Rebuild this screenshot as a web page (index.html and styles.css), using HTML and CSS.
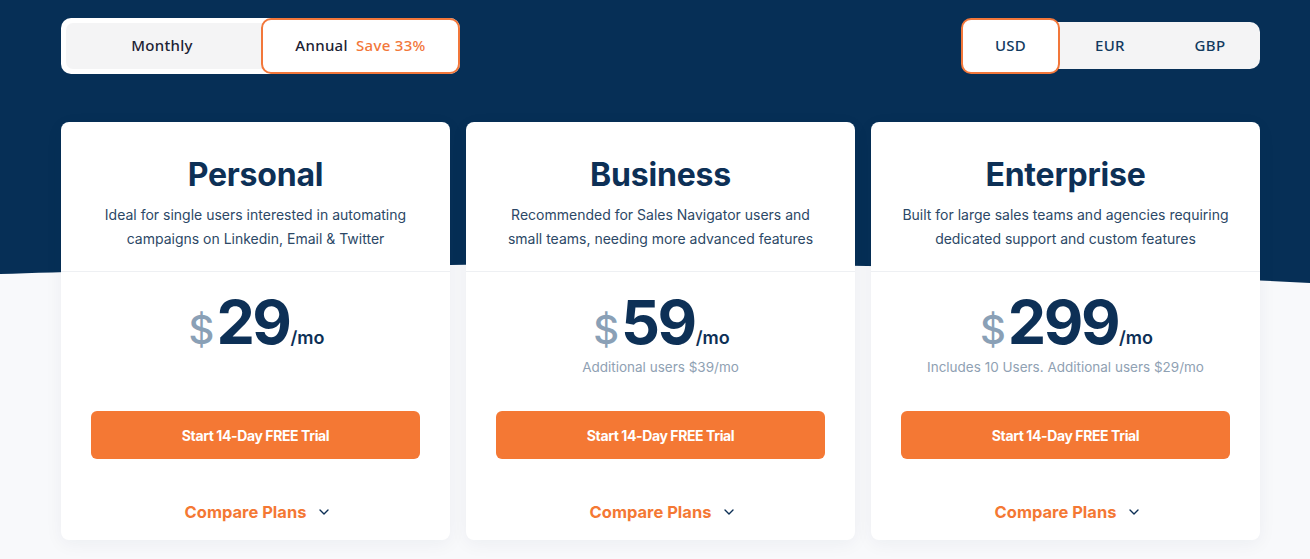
FILE: index.html
```html
<!DOCTYPE html>
<html lang="en">
<head>
<meta charset="utf-8">
<title>Pricing</title>
<link rel="stylesheet" href="styles.css">
</head>
<body>
<div class="page">
  <svg class="bg-wave" width="1310" height="290" viewBox="0 0 1310 290" preserveAspectRatio="none" aria-hidden="true">
    <path d="M0 0 H1310 V283 C900 262 700 262 450 265 C250 267 100 271 0 274 Z" fill="#062f56"/>
  </svg>
  <div class="wrap">
    <div class="toolbar">
      <div class="seg seg-period">
        <button class="seg-btn">Monthly</button>
        <button class="seg-btn active">Annual <span class="save">Save 33%</span></button>
      </div>
      <div class="seg seg-cur">
        <button class="seg-btn active">USD</button>
        <button class="seg-btn">EUR</button>
        <button class="seg-btn">GBP</button>
      </div>
    </div>

    <div class="cards">
      <div class="card">
        <div class="card-head">
          <h2>Personal</h2>
          <p>Ideal for single users interested in automating<br>campaigns on Linkedin, Email &amp; Twitter</p>
        </div>
        <div class="card-body">
          <div class="price"><span class="cur">$</span><span class="amt">29</span><span class="per">/mo</span></div>
          <div class="note"></div>
          <button class="cta">Start 14-Day FREE Trial</button>
          <a class="compare">Compare Plans <svg width="12" height="8" viewBox="0 0 12 8"><path d="M2 2 L6 6 L10 2" fill="none" stroke="#0d3056" stroke-width="1.4" stroke-linecap="round" stroke-linejoin="round"/></svg></a>
        </div>
      </div>
      <div class="card">
        <div class="card-head">
          <h2>Business</h2>
          <p>Recommended for Sales Navigator users and<br>small teams, needing more advanced features</p>
        </div>
        <div class="card-body">
          <div class="price"><span class="cur">$</span><span class="amt">59</span><span class="per">/mo</span></div>
          <div class="note">Additional users $39/mo</div>
          <button class="cta">Start 14-Day FREE Trial</button>
          <a class="compare">Compare Plans <svg width="12" height="8" viewBox="0 0 12 8"><path d="M2 2 L6 6 L10 2" fill="none" stroke="#0d3056" stroke-width="1.4" stroke-linecap="round" stroke-linejoin="round"/></svg></a>
        </div>
      </div>
      <div class="card">
        <div class="card-head">
          <h2>Enterprise</h2>
          <p>Built for large sales teams and agencies requiring<br>dedicated support and custom features</p>
        </div>
        <div class="card-body">
          <div class="price"><span class="cur">$</span><span class="amt">299</span><span class="per">/mo</span></div>
          <div class="note">Includes 10 Users. Additional users $29/mo</div>
          <button class="cta">Start 14-Day FREE Trial</button>
          <a class="compare">Compare Plans <svg width="12" height="8" viewBox="0 0 12 8"><path d="M2 2 L6 6 L10 2" fill="none" stroke="#0d3056" stroke-width="1.4" stroke-linecap="round" stroke-linejoin="round"/></svg></a>
        </div>
      </div>
    </div>
  </div>
</div>
</body>
</html>
```

FILE: styles.css
```css
* { box-sizing: border-box; }
html, body { margin: 0; padding: 0; }
body {
  background: #f8f9fb;
  font-family: "Noto Sans", "Open Sans", sans-serif;
  color: #0d3056;
}
.page {
  position: relative;
  width: 1310px;
  height: 559px;
  overflow: hidden;
}
.bg-wave {
  position: absolute;
  left: 0;
  top: 0;
  z-index: 0;
}
.wrap {
  position: relative;
  z-index: 1;
  width: 1199px;
  margin-left: 61px;
  padding-top: 18px;
}
.toolbar {
  display: flex;
  justify-content: space-between;
  align-items: flex-start;
  height: 56px;
}
.seg {
  display: flex;
  align-items: stretch;
}
.seg-btn {
  font-family: "Noto Sans", sans-serif;
  font-size: 15px;
  font-weight: 500;
  letter-spacing: 0.3px;
  border: 0;
  background: transparent;
  color: #1c2233;
  cursor: pointer;
  padding: 0 0 2px;
}
.seg-btn.active {
  background: #fff;
  border: 2px solid #f2773a;
  border-radius: 10px;
}
.seg-period {
  width: 399px;
  height: 56px;
  background: #fff;
  border-radius: 10px;
  padding: 0;
}
.seg-period .seg-btn:first-child {
  width: 200px;
  margin: 5px 0 5px 5px;
  padding-right: 8px;
  background: #f4f4f5;
  border-radius: 7px 0 0 7px;
}
.seg-period .seg-btn.active {
  width: 199px;
  margin-left: -5px;
  position: relative;
}
.save {
  color: #f2773a;
  margin-left: 4px;
}
.seg-cur {
  width: 299px;
  height: 56px;
}
.seg-cur .seg-btn {
  width: 100px;
  color: #123a60;
  background: #f4f4f5;
  margin: 4px 0 5px;
}
.seg-cur .seg-btn:last-child {
  border-radius: 0 10px 10px 0;
  width: 100px;
}
.seg-cur .seg-btn.active {
  width: 99px;
  margin: 0;
  background: #fff;
  border-radius: 10px;
  position: relative;
  z-index: 2;
}
.seg-cur .seg-btn:nth-child(2) {
  margin-left: -4px;
  padding-left: 4px;
  width: 104px;
}

.cards {
  display: grid;
  grid-template-columns: 389px 389px 389px;
  gap: 16px;
  margin-top: 48px;
}
.card {
  background: #fff;
  border-radius: 8px;
  height: 418px;
  box-shadow: 0 4px 18px rgba(20, 40, 80, 0.05);
  text-align: center;
  display: flex;
  flex-direction: column;
}
.card-head {
  padding: 33px 20px 0;
  height: 150px;
  border-bottom: 1px solid #eef0f3;
}
.card-head h2 {
  margin: 0;
  font-family: "Inter", "Noto Sans", sans-serif;
  font-weight: 700;
  font-size: 32px;
  line-height: 40px;
  letter-spacing: -0.2px;
  color: #0d3056;
}
.card-head p {
  margin: 8px 0 0;
  font-family: "Inter", "Noto Sans", sans-serif;
  font-size: 14px;
  line-height: 24px;
  color: #2c4866;
}
.card-body {
  padding: 0 30px;
  display: flex;
  flex-direction: column;
  align-items: center;
}
.price {
  margin-top: 18px;
  height: 64px;
  display: flex;
  align-items: baseline;
  justify-content: center;
  font-family: "Inter", "Noto Sans", sans-serif;
  line-height: 64px;
}
.cur {
  font-size: 40px;
  font-weight: 500;
  color: #8aa0b6;
  margin-right: 4px;
  position: relative;
  left: 2px;
}
.amt {
  font-size: 61px;
  font-weight: 700;
  color: #0d3056;
  letter-spacing: -2.5px;
}
.per {
  font-size: 18px;
  font-weight: 600;
  color: #0d3056;
  margin-left: 1px;
}
.note {
  margin-top: 3px;
  height: 20px;
  font-family: "Inter", "Noto Sans", sans-serif;
  font-size: 13.5px;
  line-height: 20px;
  color: #8fa1b3;
}
.cta {
  margin-top: 34px;
  width: 329px;
  height: 48px;
  border: 0;
  border-radius: 6px;
  background: #f47834;
  color: #fff;
  font-family: "Inter", "Noto Sans", sans-serif;
  font-weight: 700;
  font-size: 14px;
  letter-spacing: -0.4px;
  cursor: pointer;
}
.compare {
  margin-top: 41px;
  display: flex;
  align-items: center;
  gap: 12px;
  font-family: "Inter", "Noto Sans", sans-serif;
  font-weight: 700;
  font-size: 16.5px;
  line-height: 24px;
  color: #f47834;
  padding-left: 4px;
}
```
